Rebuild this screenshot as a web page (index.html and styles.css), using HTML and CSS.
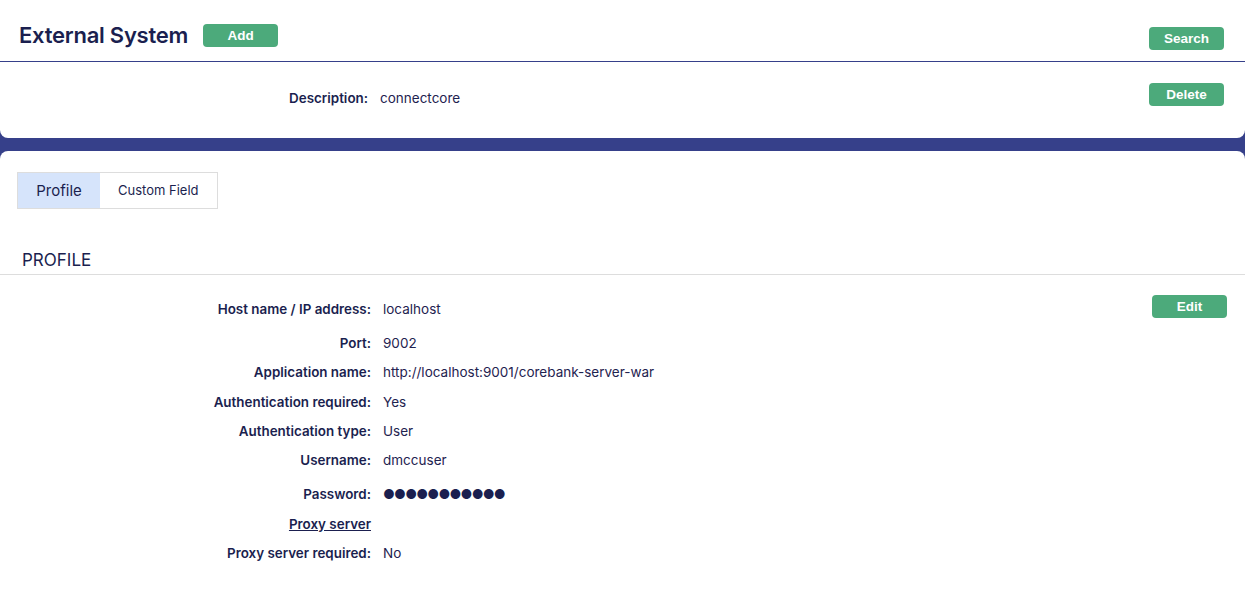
FILE: index.html
```html
<!DOCTYPE html>
<html lang="en">
<head>
  <meta charset="UTF-8">
  <title>External System</title>
  <link rel="stylesheet" href="styles.css">
</head>
<body>
  <!-- Top Card -->
  <div class="card top-card">
    <div class="page-header">
      <h1>External System</h1>
      <button class="btn">Add</button>
      <button class="btn btn-search">Search</button>
    </div>
    <div class="desc-row">
      <span class="label">Description:</span>
      <span class="value">connectcore</span>
      <button class="btn btn-delete">Delete</button>
    </div>
  </div>

  <!-- Profile Card -->
  <div class="card main-card">
    <div class="tabs">
      <div class="tab active">Profile</div>
      <div class="tab">Custom Field</div>
    </div>

    <h2 class="section-title">PROFILE</h2>

    <div class="profile">
      <div class="fields">
        <div class="field first">
          <span class="label">Host name / IP address:</span>
          <span class="value">localhost</span>
        </div>
        <div class="field">
          <span class="label">Port:</span>
          <span class="value">9002</span>
        </div>
        <div class="field">
          <span class="label">Application name:</span>
          <span class="value">http://localhost:9001/corebank-server-war</span>
        </div>
        <div class="field">
          <span class="label">Authentication required:</span>
          <span class="value">Yes</span>
        </div>
        <div class="field">
          <span class="label">Authentication type:</span>
          <span class="value">User</span>
        </div>
        <div class="field">
          <span class="label">Username:</span>
          <span class="value">dmccuser</span>
        </div>
        <div class="field password">
          <span class="label">Password:</span>
          <span class="value dots">●●●●●●●●●●●</span>
        </div>
        <div class="field">
          <span class="label link">Proxy server</span>
          <span class="value"></span>
        </div>
        <div class="field">
          <span class="label">Proxy server required:</span>
          <span class="value">No</span>
        </div>
      </div>
      <button class="btn btn-edit">Edit</button>
    </div>
  </div>
</body>
</html>
```

FILE: styles.css
```css
/* General Styles */
body {
  margin: 0;
  padding: 0;
  background-color: #36408a;
  font-family: Inter, "Noto Sans", Arial, sans-serif;
  color: #1b1f4f;
  height: 592px;
  overflow: hidden;
}

.card {
  background-color: #ffffff;
  border-radius: 8px;
}

.btn {
  width: 75px;
  height: 23px;
  padding: 0;
  border: none;
  border-radius: 4px;
  background-color: #4caa7b;
  color: #ffffff;
  font-family: Arial, "Liberation Sans", sans-serif;
  font-size: 13.5px;
  font-weight: bold;
  cursor: pointer;
}

/* Top Card */
.top-card {
  height: 138px;
  border-top-left-radius: 0;
  border-top-right-radius: 0;
}

.page-header {
  display: flex;
  align-items: flex-end;
  height: 47px;
  padding: 0 21px 14px 19px;
  border-bottom: 1px solid #36408a;
}

.page-header h1 {
  margin: 0 15px 0 0;
  font-size: 22px;
  line-height: 23px;
  font-weight: 600;
  letter-spacing: -0.25px;
}

.btn-search {
  margin-left: auto;
  margin-bottom: -3px;
}

.desc-row {
  display: flex;
  align-items: center;
  padding: 27px 21px 0 0;
}

.desc-row .label {
  width: 368px;
  text-align: right;
}

.desc-row .value {
  margin-left: 12px;
}

.btn-delete {
  margin-left: auto;
  margin-top: -6px;
}

.label {
  font-size: 13.4px;
  font-weight: 600;
}

.value {
  font-size: 13.5px;
  color: #1f2350;
}

/* Profile Card */
.main-card {
  margin-top: 13px;
  height: 450px;
  padding-top: 21px;
  box-sizing: border-box;
}

.tabs {
  display: flex;
  margin-left: 17px;
  width: max-content;
  border: 1px solid #dddddd;
}

.tab {
  height: 35px;
  line-height: 35px;
  font-size: 13px;
  padding: 0 18px;
  background-color: #ffffff;
}

.tab.active {
  background-color: #d6e4fb;
  font-size: 15px;
  width: 82px;
  padding: 0;
  text-align: center;
}

.section-title {
  margin: 40px 0 0;
  padding: 0 0 3px 22px;
  font-size: 17px;
  font-weight: 400;
  line-height: 22px;
  border-bottom: 1px solid #dddddd;
}

.profile {
  display: flex;
  align-items: flex-start;
  padding: 19px 18px 0 0;
}

.fields {
  display: flex;
  flex-direction: column;
}

.field {
  display: flex;
  align-items: center;
  height: 29.3px;
}

.field.first {
  margin-bottom: 5px;
}

.field.password {
  margin-top: 5px;
}

.field .label {
  width: 371px;
  text-align: right;
}

.field .value {
  margin-left: 12px;
}

.label.link {
  text-decoration: underline;
}

.dots {
  font-size: 13px;
  letter-spacing: -0.8px;
  color: #1b1f4f;
}

.btn-edit {
  margin-left: auto;
  margin-top: 1px;
}
```
